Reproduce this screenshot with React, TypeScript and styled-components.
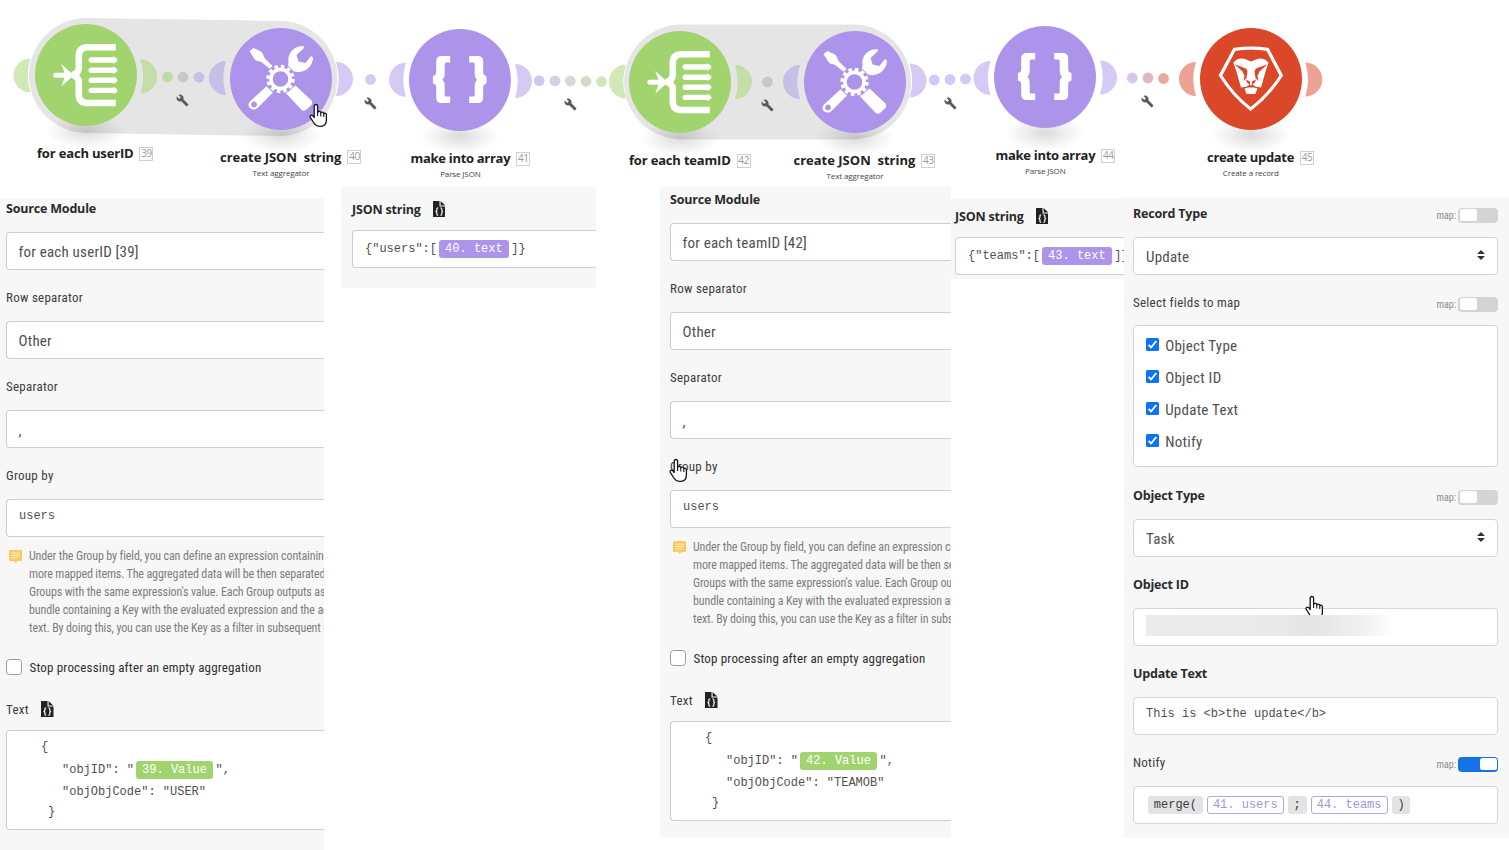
import React from "react";
import styled, { createGlobalStyle, css } from "styled-components";
import { MdBuild } from "react-icons/md";

const GlobalStyle = createGlobalStyle`
  * { box-sizing: border-box; }
  body {
    margin: 0;
    background: #fff;
    color: #2c2c2c;
    font-family: "Open Sans", "Noto Sans", sans-serif;
    overflow: hidden;
  }
`;

const GREEN = "#a1d46f";
const PURPLE = "#ab94e9";
const RED = "#da4829";

const condensed = css`
  font-family: Roboto, "Open Sans", sans-serif;
  font-stretch: 75%;
`;

/* ---------- Scenario canvas ---------- */

const Page = styled.div`
  width: 1509px;
  height: 850px;
  display: flex;
  flex-direction: column;
  overflow: hidden;
  position: relative;
`;

const Canvas = styled.section`
  position: relative;
  flex: 0 0 187px;
`;

const Links = styled.svg`
  position: absolute;
  inset: 0;
`;

const NodeShadow = styled.div<{ $x: number; $y: number }>`
  position: absolute;
  left: ${(p) => p.$x - 40}px;
  top: ${(p) => p.$y + 38}px;
  width: 80px;
  height: 36px;
  border-radius: 50%;
  background: radial-gradient(closest-side, rgba(0, 0, 0, 0.14), rgba(0, 0, 0, 0.06) 55%, rgba(0, 0, 0, 0));
`;

const NodeCircle = styled.div<{ $x: number; $y: number; $color: string }>`
  position: absolute;
  left: ${(p) => p.$x - 51}px;
  top: ${(p) => p.$y - 51}px;
  width: 102px;
  height: 102px;
  border-radius: 50%;
  background: ${(p) => p.$color};
`;

const NodeCaption = styled.div<{ $x: number; $y: number; $track: number }>`
  position: absolute;
  left: ${(p) => p.$x}px;
  top: ${(p) => p.$y - 10}px;
  display: flex;
  align-items: center;
  gap: 6px;
  height: 20px;
  white-space: pre;
  font-size: 13px;
  font-weight: 700;
  letter-spacing: ${(p) => p.$track}px;
  color: #222;
`;

const NodeNumber = styled.span`
  display: block;
  width: 14px;
  height: 14px;
  border: 1px solid #d0d0d0;
  background: #fff;
  color: #999;
  font-size: 10px;
  font-weight: 400;
  letter-spacing: -0.4px;
  line-height: 11px;
  text-align: center;
  margin-top: 1px;
`;

const NodeSubtitle = styled.div<{ $x: number; $y: number }>`
  position: absolute;
  left: ${(p) => p.$x - 60}px;
  top: ${(p) => p.$y - 6}px;
  width: 120px;
  line-height: 12px;
  font-size: 8px;
  letter-spacing: -0.12px;
  text-align: center;
  color: #444;
`;

const Wrench = styled(MdBuild)<{ $x: number; $y: number }>`
  position: absolute;
  left: ${(p) => p.$x - 6.6}px;
  top: ${(p) => p.$y - 6.6}px;
  width: 13px;
  height: 13px;
  color: #5a5a5a;
`;

const Cursor = styled.svg<{ $x: number; $y: number; $h: number }>`
  position: absolute;
  left: ${(p) => p.$x}px;
  top: ${(p) => p.$y}px;
  width: 20px;
  height: ${(p) => p.$h}px;
  z-index: 5;
`;

const Hand = ({ x, y, h = 25 }: { x: number; y: number; h?: number }) => (
  <Cursor $x={x} $y={y} $h={h} viewBox={`0 0 20 ${h}`}>
    <path
      d="M6.2 14.6V3.2a1.7 1.7 0 0 1 3.4 0v6.2c.3-1.3 3-1.3 3.2.4c.5-1.1 2.9-.9 3 .8c.7-.7 2.5-.3 2.6 1.2v5.2c0 3.7-2 6.3-5.6 6.3h-1.6c-2.7 0-4-1.3-5.3-3.3l-3.5-5.3c-1.2-2 .9-3.4 2.4-2z"
      fill="#fff"
      stroke="#15151f"
      strokeWidth="1.3"
      strokeLinejoin="round"
    />
    <path d="M9.6 9v4M12.8 10v3.5M15.8 11v3" stroke="#15151f" strokeWidth="1.1" fill="none" />
  </Cursor>
);

/* Icons share a 102x102 box centred on the node. */
const Glyph = styled.svg`
  display: block;
  width: 102px;
  height: 102px;
`;

const IteratorGlyph = () => (
  <Glyph viewBox="0.7 0 102 102">
    <path
      d="M81.5 23.2H53.5Q44.5 23.2 44.5 32V43.5q0 6-6.5 7.5q6.5 1.5 6.5 7.5V70.2Q44.5 79 53.5 79H81.5"
      fill="none"
      stroke="#fff"
      strokeWidth="6.6"
    />
    <path d="M21.5 51.2H32" stroke="#fff" strokeWidth="5" strokeLinecap="round" />
    <path d="M27 40L39.5 51.2L27 62.5L31 51.2Z" fill="#fff" />
    {[36, 46.3, 56.3, 66.4].map((y) => (
      <g key={y}>
        <path d={`M57 ${y}H80`} stroke="#fff" strokeWidth="5.4" strokeLinecap="round" />
        <path d={`M79 ${y - 4}L83.5 ${y}L79 ${y + 4}Z`} fill="#fff" />
      </g>
    ))}
  </Glyph>
);

const ToolsGlyph = () => (
  <Glyph viewBox="0 0 102 102">
    <g fill="#fff">
      {/* screwdriver */}
      <path d="M19.5 23.2L23.3 19.9L30.5 23.3C33.5 25 33 28 35 30.5L44.5 40L42 42.8L32 34.5C29.5 32.5 26.5 34 24.5 31Z" />
      {/* wrench */}
      <path d="M74 18.3C65 17 57 24.5 58.5 34L58 38L53.5 43L58 47.5L62.5 43C72 47 83 40 83 29.5L81 28L75.5 35L68.5 33.5L66.5 27L73.5 20.5Z" />
      {/* handles */}
      <path fillRule="evenodd" d="M36.5 58.3L43 64.5L27.5 80C22 84.5 15.5 78 20 73.5ZM24 73.6a3 3 0 1 0 .1 0Z" />
      <path d="M55.5 64.8L65.5 57.5L81.5 72.5Q83 75 81.5 77L76 82Q73.5 83.5 71.5 81.8Z" />
    </g>
    <circle cx="50.5" cy="51" r="15" fill={PURPLE} />
    <circle cx="50.5" cy="51" r="12.5" fill="none" stroke="#fff" strokeWidth="3.4" strokeDasharray="3.5 3.045" />
    <circle cx="50.5" cy="51" r="9.6" fill="none" stroke="#fff" strokeWidth="3.6" />
  </Glyph>
);

const BRACE =
  "M41.5 27H33Q27.5 27 27.5 32.5V43Q27.5 46.5 24.2 47V54.5Q27.5 55 27.5 58V68.5Q27.5 74 33 74H41.5V67.5H37.5Q36 67.5 36 66V57Q36 52.5 33.5 50.7Q36 49 36 44.5V35Q36 33.5 37.5 33.5H41.5Z";

const BracesGlyph = () => (
  <Glyph viewBox="0.3 0 102 102">
    <path d={BRACE} fill="#fff" />
    <path d={BRACE} fill="#fff" transform="translate(102 0) scale(-1 1)" />
  </Glyph>
);

const LionGlyph = () => (
  <Glyph viewBox="0 0 102 102">
    <path
      d="M34.5 21.3Q51 19 67.5 21.3L81.3 47.5Q68 68 50.7 81Q33.5 68 20.5 47.5Z"
      fill="none"
      stroke="#fff"
      strokeWidth="3.2"
    />
    <path
      fill="#fff"
      d="M33.3 34.5L37 31.5Q42 29.5 46 31.5L51 33.5L56 31.5Q60 29.5 65 31.5L68.5 34.5L66 42L61 59.5L55.5 58.8L51 57L46.5 58.8L41 59.5L36 42Z"
    />
    <g fill={RED}>
      <path d="M34.5 36.2L46 40.5L47.5 43L46.5 50L43.5 53L44.5 48L42.5 43.5Z" />
      <path d="M67.5 36.2L56 40.5L54.5 43L55.5 50L58.5 53L57.5 48L59.5 43.5Z" />
      <path d="M46 51.5L50 53.5V57.5H52V53.5L56 51.5L55 54.5L52.5 56.5L57 60H45L49.5 56.5L47 54.5Z" />
    </g>
    <path fill="#fff" d="M44.5 60.5L48 59.5H54L57.5 60.5L55.3 66H46.5Z" />
  </Glyph>
);

type NodeDef = {
  x: number;
  y: number;
  color: string;
  icon: React.ReactNode;
  title: string;
  track: number;
  num: number;
  tx: number;
  ty: number;
  sub?: string;
};

const NODES: NodeDef[] = [
  { x: 85.5, y: 75, color: GREEN, icon: <IteratorGlyph />, title: "for each userID", track: -0.17, num: 39, tx: 37, ty: 153 },
  { x: 281, y: 79, color: PURPLE, icon: <ToolsGlyph />, title: "create JSON  string", track: -0.02, num: 40, tx: 220, ty: 156.5, sub: "Text aggregator" },
  { x: 460.4, y: 80, color: PURPLE, icon: <BracesGlyph />, title: "make into array", track: -0.3, num: 41, tx: 410.5, ty: 158, sub: "Parse JSON" },
  { x: 680.4, y: 82, color: GREEN, icon: <IteratorGlyph />, title: "for each teamID", track: -0.18, num: 42, tx: 629, ty: 160 },
  { x: 855, y: 82, color: PURPLE, icon: <ToolsGlyph />, title: "create JSON  string", track: 0, num: 43, tx: 793.5, ty: 160, sub: "Text aggregator" },
  { x: 1045.3, y: 77, color: PURPLE, icon: <BracesGlyph />, title: "make into array", track: -0.3, num: 44, tx: 995.5, ty: 155, sub: "Parse JSON" },
  { x: 1250.8, y: 79.4, color: RED, icon: <LionGlyph />, title: "create update", track: -0.3, num: 45, tx: 1207, ty: 157, sub: "Create a record" },
];

const OUTER_LOBES: [number, number, number, string][] = [
  [30.5, 75.5, -1, "#d0e9b7"],
  [336, 79, 1, "#d5caf4"],
  [406, 79.8, -1, "#d5caf4"],
  [515, 81, 1, "#d5caf4"],
  [626, 81.5, -1, "#d0e9b7"],
  [909.5, 80.5, 1, "#d5caf4"],
  [990.5, 78, -1, "#d5caf4"],
  [1100, 77.5, 1, "#d5caf4"],
  [1196, 79, -1, "#eda394"],
  [1305.3, 79.5, 1, "#eda394"],
];

const INNER_LOBES: [number, number, number, string][] = [
  [140.3, 76.5, 1, "#c3dea8"],
  [226, 78, -1, "#c8bfe6"],
  [735, 82, 1, "#c3dea8"],
  [800, 82, -1, "#c8bfe6"],
];

const DOTS: [number, number, string][] = [
  [167.5, 77, "#bedba5"],
  [183, 77.2, "#c5c9c8"],
  [199, 77.3, "#c6bfe6"],
  [370.5, 79.5, "#d4caf5"],
  [539.2, 80.7, "#d1c8f0"],
  [555, 80.8, "#d3d0e3"],
  [570.3, 81, "#d5d9d6"],
  [586, 81.3, "#d1dcc5"],
  [601.5, 81.5, "#cfe7b8"],
  [767.5, 82, "#c5c9c8"],
  [934.3, 80, "#d4c9f4"],
  [950, 79.5, "#d4c9f4"],
  [965.5, 79, "#d4c9f4"],
  [1132.3, 78, "#d8c7ec"],
  [1148, 78, "#e1b6c8"],
  [1163.5, 78.5, "#eaa79f"],
];

const WRENCHES: [number, number][] = [
  [182.8, 100.5],
  [370.5, 103.5],
  [570.5, 104.5],
  [767.5, 105.5],
  [950.5, 103.5],
  [1147.5, 101.5],
];

const Lobe = ({ x, y, dir, color }: { x: number; y: number; dir: number; color: string }) => (
  <path
    d={`M${x} ${y - 17}A17 17 0 0 ${dir > 0 ? 1 : 0} ${x} ${y + 17}A56 56 0 0 ${dir > 0 ? 0 : 1} ${x} ${y - 17}Z`}
    fill={color}
  />
);

const Scenario = () => (
  <Canvas>
    <Links width="1509" height="187">
      {OUTER_LOBES.map(([x, y, dir, color]) => (
        <Lobe key={x} x={x} y={y} dir={dir} color={color} />
      ))}
      <path d="M86.5 75.5L280 78.5M681.5 82H853.5" stroke="#e5e5e5" strokeWidth="115" strokeLinecap="round" />
      {INNER_LOBES.map(([x, y, dir, color]) => (
        <Lobe key={x} x={x} y={y} dir={dir} color={color} />
      ))}
      {DOTS.map(([x, y, color]) => (
        <circle key={x} cx={x} cy={y} r="5.4" fill={color} />
      ))}
    </Links>
    {NODES.map((n) => (
      <React.Fragment key={n.num}>
        <NodeShadow $x={n.x} $y={n.y} />
        <NodeCircle $x={n.x} $y={n.y} $color={n.color}>
          {n.icon}
        </NodeCircle>
        <NodeCaption $x={n.tx} $y={n.ty} $track={n.track}>
          {n.title}
          <NodeNumber>{n.num}</NodeNumber>
        </NodeCaption>
        {n.sub && (
          <NodeSubtitle $x={n.x} $y={n.ty + 16}>
            {n.sub}
          </NodeSubtitle>
        )}
      </React.Fragment>
    ))}
    {WRENCHES.map(([x, y]) => (
      <Wrench key={x} $x={x} $y={y} />
    ))}
    <Hand x={308} y={103} />
  </Canvas>
);

/* ---------- Settings panels ---------- */

const Panels = styled.main`
  display: flex;
  align-items: flex-start;
`;

const Panel = styled.section<{
  $w: number;
  $h: number;
  $top?: number;
  $left?: number;
  $pad: string;
}>`
  flex: 0 0 ${(p) => p.$w}px;
  height: ${(p) => p.$h}px;
  margin: ${(p) => p.$top ?? 0}px 0 0 ${(p) => p.$left ?? 0}px;
  padding: ${(p) => p.$pad};
  background: #f7f7f7;
  overflow: hidden;
`;

const Label = styled.div<{ $bold?: boolean }>`
  display: flex;
  align-items: center;
  height: 20px;
  white-space: nowrap;
  ${(p) =>
    p.$bold
      ? css`
          font-size: 12.5px;
          font-weight: 700;
          letter-spacing: -0.19px;
          color: #2a2a2a;
        `
      : css`
          ${condensed}
          font-size: 13px;
          letter-spacing: 0.26px;
          color: #3d3d3d;
        `}
`;

const fieldBox = css`
  border: 1px solid #cfcfcf;
  border-radius: 4px;
  background: #fff;
  white-space: pre;
`;

const Field = styled.div<{ $gap?: number; $open?: boolean; $drop?: number }>`
  ${fieldBox}
  ${condensed}
  display: flex;
  align-items: center;
  height: 38px;
  margin: ${(p) => p.$gap ?? 14}px 0 17px;
  padding: ${(p) => p.$drop ?? 1}px 12px 0 11.5px;
  font-size: 15px;
  letter-spacing: 0.22px;
  color: #505050;
  ${(p) => p.$open && "border-right: 0; border-radius: 4px 0 0 4px;"}
`;

const mono = css`
  font-family: "Liberation Mono", monospace;
  font-size: 12px;
  font-stretch: 100%;
  letter-spacing: 0;
  color: #505050;
`;

const MonoField = styled(Field)<{ $lift?: number }>`
  ${mono}
  padding: 0 12px ${(p) => p.$lift ?? 4}px;
`;

const Note = styled.div`
  ${condensed}
  display: flex;
  gap: 7px;
  margin-top: -7px;
  padding-left: 3px;
  white-space: pre;
  font-size: 12px;
  letter-spacing: -0.13px;
  line-height: 18px;
  color: #7d7d7d;
`;

const NoteIcon = styled.svg`
  flex: 0 0 13px;
  height: 13px;
  margin-top: 3px;
`;

const CheckRow = styled.div`
  ${condensed}
  display: flex;
  align-items: center;
  gap: 8px;
  height: 20px;
  margin-top: 20px;
  white-space: nowrap;
  font-size: 13px;
  letter-spacing: 0.18px;
  color: #2f2f2f;
`;

const EmptyCheck = styled.span`
  flex: 0 0 15.5px;
  height: 15.5px;
  border: 1px solid #999;
  border-radius: 3.5px;
  background: #fff;
`;

const CodeBox = styled.div`
  ${fieldBox}
  ${mono}
  height: 100px;
  margin-top: 11px;
  padding: 6px 12px 0;
  border-right: 0;
  border-radius: 4px 0 0 4px;
`;

const CodeLine = styled.div<{ $indent: number; $h: number }>`
  display: flex;
  align-items: center;
  height: ${(p) => p.$h}px;
  padding-left: ${(p) => p.$indent}px;
`;

const Pill = styled.span<{ $color?: string }>`
  display: inline-flex;
  align-items: center;
  justify-content: center;
  height: 18px;
  padding: 0 6.1px;
  margin: 0 2.5px 0 2px;
  border-radius: 3px;
  background: ${(p) => p.$color};
  color: #fff;
`;

const OutlinePill = styled(Pill)`
  margin: 0 2px;
  padding: 0 5.1px;
  border: 1px solid #b5a5e4;
  background: #fff;
  color: #a592df;
`;

const FnPill = styled(Pill)`
  margin: 0 2px;
  padding: 0 5.8px;
  background: #e3e3e6;
  color: #3c3c3c;
`;

const FileIconSvg = styled.svg`
  width: 12.5px;
  height: 16px;
  margin: -1px 0 0 12.2px;
`;

const FileIcon = () => (
  <FileIconSvg viewBox="0 0 12.5 16">
    <path d="M0 0H6.5V5.5H12.5V16H0Z" fill="#222" />
    <path d="M7.6 0L12.3 4.6H7.6Z" fill="#222" />
    <path
      d="M5.2 6.8Q3.8 6.8 3.9 8.5V9.6L3 10.5L3.9 11.5V12.8Q3.8 14.3 5.2 14.3M7.4 6.8Q8.9 6.8 8.8 8.5V9.6L9.6 10.5L8.8 11.5V12.8Q8.900 14.3 7.4 14.3"
      fill="none"
      stroke="#f7f7f7"
      strokeWidth="1.2"
    />
  </FileIconSvg>
);

const TextLabel = styled(Label)`
  margin-top: 22px;
`;

const AggregatorFields = ({ source, value, type }: { source: string; value: string; type: string }) => (
  <>
    <Label $bold>Source Module</Label>
    <Field $open>{source}</Field>
    <Label>Row separator</Label>
    <Field $open>Other</Field>
    <Label>Separator</Label>
    <Field $open $drop={4}>
      ,
    </Field>
    <Label>Group by</Label>
    <MonoField $open>users</MonoField>
    <Note>
      <NoteIcon viewBox="0 0 13 13">
        <path d="M1 0H12Q13 0 13 1V10Q13 11 12 11H8.5L6.8 13L5 11H1Q0 11 0 10V1Q0 0 1 0Z" fill="#fbca60" />
        <path d="M2.5 3.2H10.5M2.5 5.5H10.5M2.5 7.8H8.5" stroke="#fff" strokeWidth="1" opacity="0.75" />
      </NoteIcon>
      {
        "Under the Group by field, you can define an expression containing one or\nmore mapped items. The aggregated data will be then separated into\nGroups with the same expression's value. Each Group outputs as one\nbundle containing a Key with the evaluated expression and the aggregated\ntext. By doing this, you can use the Key as a filter in subsequent modules."
      }
    </Note>
    <CheckRow>
      <EmptyCheck />
      Stop processing after an empty aggregation
    </CheckRow>
    <TextLabel>
      Text
      <FileIcon />
    </TextLabel>
    <CodeBox>
      <CodeLine $indent={22} $h={20}>{"{"}</CodeLine>
      <CodeLine $indent={43} $h={25}>
        {'"objID": "'}
        <Pill $color={GREEN}>{value}</Pill>
        {'",'}
      </CodeLine>
      <CodeLine $indent={43} $h={19}>{`"objObjCode": "${type}"`}</CodeLine>
      <CodeLine $indent={29} $h={22}>{"}"}</CodeLine>
    </CodeBox>
  </>
);

const JsonStringField = ({ name, value }: { name: string; value: string }) => (
  <>
    <Label $bold>
      JSON string
      <FileIcon />
    </Label>
    <MonoField $open $lift={1} $gap={11}>
      {`{"${name}":[`}
      <Pill $color={PURPLE}>{value}</Pill>
      {"]}"}
    </MonoField>
  </>
);

const LabelRow = styled.div`
  display: flex;
  justify-content: space-between;
  align-items: center;
  height: 20px;
`;

const MapControl = styled.div`
  ${condensed}
  display: flex;
  align-items: center;
  gap: 2px;
  margin-top: 4px;
  font-size: 10px;
  color: #8a8a8a;
`;

const Toggle = styled.span<{ $on?: boolean }>`
  display: flex;
  justify-content: ${(p) => (p.$on ? "flex-end" : "flex-start")};
  width: 40px;
  height: 15px;
  padding: 1.5px;
  border-radius: 4px;
  background: ${(p) => (p.$on ? "#1473e6" : "#d4d4d4")};

  &::after {
    content: "";
    width: 17px;
    height: 12px;
    border-radius: 2.5px;
    background: #fff;
  }
`;

const MapToggle = ({ on }: { on?: boolean }) => (
  <MapControl>
    map:
    <Toggle $on={on} />
  </MapControl>
);

const SelectField = styled(Field)`
  justify-content: space-between;
  border-color: #d6d6d6;
  padding-left: 12px;
`;

const InputField = styled(MonoField)`
  border-color: #d6d6d6;
`;

const SelectArrow = styled.svg`
  width: 8px;
  height: 10px;
  margin-top: -3px;
`;

const Sorter = () => (
  <SelectArrow viewBox="0 0 8 10">
    <path d="M0 4L4 0L8 4ZM0 6L4 10L8 6Z" fill="#333" />
  </SelectArrow>
);

const CheckList = styled.div`
  ${fieldBox}
  display: flex;
  flex-direction: column;
  height: 142px;
  margin: 13px 0 18px;
  padding: 4px 12px 0;
  border-color: #d6d6d6;
`;

const CheckItem = styled.div`
  ${condensed}
  display: flex;
  align-items: center;
  gap: 6.2px;
  height: 32px;
  font-size: 15px;
  letter-spacing: 0.26px;
  color: #505050;
`;

const Tick = styled.svg`
  width: 13px;
  height: 13px;
  margin-top: -3px;
`;

const RedactedValue = styled.div`
  width: 248px;
  height: 21px;
  background: linear-gradient(90deg, #ebebec 0%, #e9e9ea 55%, #e4e4e5 66%, #e9e9ea 75%, #f0f0f0 87%, #fff 100%);
`;

const FIELDS_TO_MAP = ["Object Type", "Object ID", "Update Text", "Notify"];

export default function App() {
  return (
    <Page>
      <GlobalStyle />
      <Scenario />
      <Panels>
        <Panel $w={324} $h={652} $top={11} $pad="0 0 0 6px">
          <AggregatorFields source="for each userID [39]" value="39. Value" type="USER" />
        </Panel>
        <Panel $w={255} $h={101} $left={17} $pad="12px 0 0 11px">
          <JsonStringField name="users" value="40. text" />
        </Panel>
        <Panel $w={291} $h={650} $left={64} $pad="2px 0 0 10px">
          <AggregatorFields source="for each teamID [42]" value="42. Value" type="TEAMOB" />
        </Panel>
        <Panel $w={173} $h={81} $top={11} $pad="8px 0 0 4px">
          <JsonStringField name="teams" value="43. text" />
        </Panel>
        <Panel $w={385} $h={641} $top={10} $pad="6px 11px 0 9px">
          <LabelRow>
            <Label $bold>Record Type</Label>
            <MapToggle />
          </LabelRow>
          <SelectField>
            Update
            <Sorter />
          </SelectField>
          <LabelRow>
            <Label>Select fields to map</Label>
            <MapToggle />
          </LabelRow>
          <CheckList>
            {FIELDS_TO_MAP.map((name) => (
              <CheckItem key={name}>
                <Tick viewBox="0 0 13 13">
                  <rect width="13" height="13" rx="1.5" fill="#0b74f5" />
                  <path d="M2.6 6.8L5.2 9.4L10.3 3" fill="none" stroke="#fff" strokeWidth="1.9" />
                </Tick>
                {name}
              </CheckItem>
            ))}
          </CheckList>
          <LabelRow>
            <Label $bold>Object Type</Label>
            <MapToggle />
          </LabelRow>
          <SelectField>
            Task
            <Sorter />
          </SelectField>
          <Label $bold>Object ID</Label>
          <InputField>
            <RedactedValue />
          </InputField>
          <Label $bold>Update Text</Label>
          <InputField>{"This is <b>the update</b>"}</InputField>
          <LabelRow>
            <Label>Notify</Label>
            <MapToggle on />
          </LabelRow>
          <InputField $lift={0}>
            <FnPill>merge(</FnPill>
            <OutlinePill>41. users</OutlinePill>
            <FnPill>;</FnPill>
            <OutlinePill>44. teams</OutlinePill>
            <FnPill>)</FnPill>
          </InputField>
        </Panel>
      </Panels>
      <Hand x={668} y={458} />
      <Hand x={1304} y={595} h={20} />
    </Page>
  );
}
